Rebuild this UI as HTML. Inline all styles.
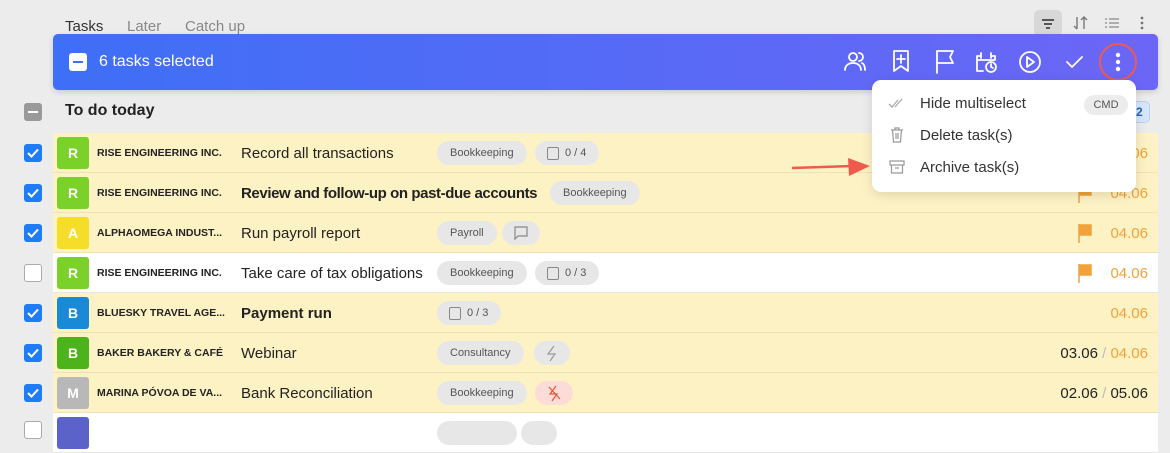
<!DOCTYPE html>
<html><head><meta charset="utf-8"><style>
*{box-sizing:border-box;margin:0;padding:0}
body{width:1170px;height:425px;overflow:hidden;background:#ececec;font-family:"Liberation Sans",sans-serif;position:relative;color:#222}
.a{position:absolute}
.tab{top:18px;font-size:15px;color:#888}
.bar{left:53px;top:34px;width:1105px;height:56px;border-radius:5px;background:linear-gradient(90deg,#3e6ff6,#6c66f6);box-shadow:0 2px 6px rgba(0,0,0,.15)}
.row{left:53px;width:1105px;height:40px;background:#fdf2c4;border-bottom:1px solid #efe3b4}
.row.w{background:#fff;border-bottom:1px solid #e6e6e6}
.cb{left:24px;width:18px;height:18px;border-radius:3px;background:#1f7cf5}
.cb svg{position:absolute;left:2px;top:2px}
.cb.e{background:#fff;border:1.5px solid #aaa}
.av{left:4px;top:4px;width:32px;height:32px;border-radius:3px;color:#fff;font-weight:bold;font-size:14px;text-align:center;line-height:32px}
.co{left:44px;top:14px;font-size:10.5px;font-weight:bold;color:#222}
.ti{left:188px;top:12px;font-size:15px;color:#222}
.tg{top:8px;height:24px;border-radius:12px;background:#e7e7e7;font-size:11px;color:#555;line-height:24px;padding:0 13px}
.dt{right:10px;top:12px;font-size:15px;color:#f1a23a}
.fl{top:10px;width:16px;height:20px}
.mi{left:48px;font-size:15px;color:#333}
</style></head><body>
<div class="a tab" style="left:65px;color:#333">Tasks</div>
<div class="a tab" style="left:127px">Later</div>
<div class="a tab" style="left:185px">Catch up</div>
<div class="a" style="left:1034px;top:10px;width:28px;height:26px;border-radius:5px;background:#d8d8d8"></div>
<svg class="a" style="left:1039px;top:15px" width="18" height="16"><path d="M3 5h12M5 9h8M7 13h4" stroke="#444" stroke-width="1.8"/></svg>
<svg class="a" style="left:1072px;top:14px" width="18" height="18"><path d="M5 3v12M2 12l3 3M12 15V3M9 6l3-3 3 3" stroke="#777" stroke-width="1.4" fill="none"/></svg>
<svg class="a" style="left:1103px;top:15px" width="18" height="16"><path d="M2 4h2M6 4h10M2 8h2M6 8h10M2 12h2M6 12h10" stroke="#999" stroke-width="1.4"/></svg>
<svg class="a" style="left:1138px;top:14px" width="8" height="18"><circle cx="4" cy="4" r="1.4" fill="#777"/><circle cx="4" cy="9" r="1.4" fill="#777"/><circle cx="4" cy="14" r="1.4" fill="#777"/></svg>

<div class="a" style="left:24px;top:103px;width:18px;height:18px;border-radius:3px;background:#999"><div class="a" style="left:4px;top:8px;width:10px;height:2px;background:#fff"></div></div>
<div class="a" style="left:65px;top:102px;font-size:16px;font-weight:bold">To do today</div>
<div class="a" style="left:1126px;top:101px;width:24px;height:22px;border-radius:5px;background:#d6e6fb;border:1px solid #b7d0f4;font-size:12px;color:#2a63b8;font-weight:bold;line-height:20px;padding-left:9px">2</div>

<div class="a row" style="top:133px"><div class="a av" style="background:#79d12a">R</div><div class="a co">RISE ENGINEERING INC.</div><div class="a ti">Record all transactions</div><div class="a tg" style="left:384px">Bookkeeping</div><div class="a tg" style="left:482px;padding-left:30px">0 / 4</div><div class="a" style="left:494px;top:14px;width:12px;height:13px;border:1.3px solid #888;border-radius:2px"></div><div class="a dt">04.06</div></div>
<div class="a row" style="top:173px"><div class="a av" style="background:#79d12a">R</div><div class="a co">RISE ENGINEERING INC.</div><div class="a ti" style="font-weight:bold;letter-spacing:-0.4px">Review and follow-up on past-due accounts</div><div class="a tg" style="left:497px">Bookkeeping</div><svg class="a fl" style="left:1024px"><path d="M2 1v19M2 2h12v10H2" fill="#f1a23a" stroke="#f1a23a" stroke-width="1.5"/></svg><div class="a dt">04.06</div></div>
<div class="a row" style="top:213px"><div class="a av" style="background:#f6dd2a">A</div><div class="a co">ALPHAOMEGA INDUST...</div><div class="a ti">Run payroll report</div><div class="a tg" style="left:384px">Payroll</div><div class="a tg" style="left:449px;width:38px"></div><svg class="a" style="left:460px;top:8px" width="16" height="24"><path d="M2 6h12v9H5l-3 3z" fill="none" stroke="#888" stroke-width="1.2"/></svg><svg class="a fl" style="left:1024px"><path d="M2 1v19M2 2h12v10H2" fill="#f1a23a" stroke="#f1a23a" stroke-width="1.5"/></svg><div class="a dt">04.06</div></div>
<div class="a row w" style="top:253px"><div class="a av" style="background:#79d12a">R</div><div class="a co">RISE ENGINEERING INC.</div><div class="a ti">Take care of tax obligations</div><div class="a tg" style="left:384px">Bookkeeping</div><div class="a tg" style="left:482px;padding-left:30px">0 / 3</div><div class="a" style="left:494px;top:14px;width:12px;height:13px;border:1.3px solid #888;border-radius:2px"></div><svg class="a fl" style="left:1024px"><path d="M2 1v19M2 2h12v10H2" fill="#f1a23a" stroke="#f1a23a" stroke-width="1.5"/></svg><div class="a dt">04.06</div></div>
<div class="a row" style="top:293px"><div class="a av" style="background:#1a8ad8">B</div><div class="a co">BLUESKY TRAVEL AGE...</div><div class="a ti" style="font-weight:bold">Payment run</div><div class="a tg" style="left:384px;padding-left:30px">0 / 3</div><div class="a" style="left:396px;top:14px;width:12px;height:13px;border:1.3px solid #888;border-radius:2px"></div><div class="a dt">04.06</div></div>
<div class="a row" style="top:333px"><div class="a av" style="background:#4cb31a">B</div><div class="a co">BAKER BAKERY &amp; CAFÉ</div><div class="a ti">Webinar</div><div class="a tg" style="left:384px">Consultancy</div><div class="a tg" style="left:481px;width:36px"></div><svg class="a" style="left:491px;top:8px" width="16" height="24"><path d="M10 5l-6 8h7l-5 7" fill="none" stroke="#999" stroke-width="1.2"/></svg><div class="a dt"><span style="color:#222">03.06</span> <span style="color:#bbb">/</span> 04.06</div></div>
<div class="a row" style="top:373px"><div class="a av" style="background:#b8b8b8">M</div><div class="a co">MARINA PÓVOA DE VA...</div><div class="a ti">Bank Reconciliation</div><div class="a tg" style="left:384px">Bookkeeping</div><div class="a tg" style="left:482px;width:38px;background:#fbdcd6"></div><svg class="a" style="left:493px;top:8px" width="16" height="24"><path d="M10 5l-6 8h7l-5 7M3 6l11 12" fill="none" stroke="#e8553a" stroke-width="1.2"/></svg><div class="a dt" style="color:#222">02.06 <span style="color:#bbb">/</span> 05.06</div></div>
<div class="a row w" style="top:413px"><div class="a av" style="background:#5b63c9"></div><div class="a tg" style="left:384px;width:80px"></div><div class="a tg" style="left:468px;width:36px"></div></div>

<div class="a cb" style="top:144px"><svg width="14" height="14"><path d="M2 7l3.5 3.5L12 3.5" stroke="#fff" stroke-width="2" fill="none"/></svg></div>
<div class="a cb" style="top:184px"><svg width="14" height="14"><path d="M2 7l3.5 3.5L12 3.5" stroke="#fff" stroke-width="2" fill="none"/></svg></div>
<div class="a cb" style="top:224px"><svg width="14" height="14"><path d="M2 7l3.5 3.5L12 3.5" stroke="#fff" stroke-width="2" fill="none"/></svg></div>
<div class="a cb e" style="top:264px"></div>
<div class="a cb" style="top:304px"><svg width="14" height="14"><path d="M2 7l3.5 3.5L12 3.5" stroke="#fff" stroke-width="2" fill="none"/></svg></div>
<div class="a cb" style="top:344px"><svg width="14" height="14"><path d="M2 7l3.5 3.5L12 3.5" stroke="#fff" stroke-width="2" fill="none"/></svg></div>
<div class="a cb" style="top:384px"><svg width="14" height="14"><path d="M2 7l3.5 3.5L12 3.5" stroke="#fff" stroke-width="2" fill="none"/></svg></div>
<div class="a cb e" style="top:421px"></div>

<div class="a bar">
<div class="a" style="left:16px;top:19px;width:18px;height:18px;border-radius:3px;background:#fff"><div class="a" style="left:4px;top:8px;width:10px;height:2px;background:#3e6ff6"></div></div>
<div class="a" style="left:46px;top:19px;font-size:16px;color:#fff">6 tasks selected</div>
<svg class="a" style="left:788px;top:14px" width="350" height="28" fill="none" stroke="#fff" stroke-width="1.8" stroke-linecap="round" stroke-linejoin="round">
<circle cx="12" cy="9" r="4"/><path d="M4 22c0-4 3-7 8-7s8 3 8 7M18 5a4 4 0 0 1 0 8M21 15c2 1 3 4 3 7"/>
<path d="M53 3h14v20l-7-5-7 5zM60 7v8M56 11h8"/>
<path d="M96 25V3h16l-3 6 3 6H96"/>
<path d="M140 8h-4v15h6M136 12h18V8h-4M140 5v5M150 5v5"/><circle cx="150" cy="19" r="5"/><path d="M150 16v3l2 1"/>
<circle cx="189" cy="14" r="10"/><path d="M186 9v10l7-5z"/>
<path d="M226 14l5 5 10-10"/>
<circle cx="277" cy="7" r="1.3" fill="#fff"/><circle cx="277" cy="14" r="1.3" fill="#fff"/><circle cx="277" cy="21" r="1.3" fill="#fff"/>
</svg>
</div>
<div class="a" style="left:1099px;top:43px;width:38px;height:38px;border-radius:50%;border:2.5px solid #ef5a4c"></div>

<div class="a" style="left:872px;top:80px;width:264px;height:112px;background:#fff;border-radius:9px;box-shadow:0 3px 12px rgba(0,0,0,.12)">
<svg class="a" style="left:16px;top:16px" width="18" height="14"><path d="M1 8l3 3 6-7M7 11l7-8" stroke="#aaa" stroke-width="1.3" fill="none"/></svg>
<div class="a mi" style="top:15px">Hide multiselect</div>
<div class="a" style="left:212px;top:15px;width:44px;height:20px;border-radius:10px;background:#ececec;font-size:11px;color:#555;text-align:center;line-height:20px">CMD</div>
<svg class="a" style="left:18px;top:47px" width="14" height="16"><path d="M1 3h12M5 3V1h4v2M2.5 3l1 12h7l1-12M6 6v6M8 6v6" stroke="#999" stroke-width="1.2" fill="none"/></svg>
<div class="a mi" style="top:47px">Delete task(s)</div>
<svg class="a" style="left:17px;top:80px" width="16" height="14"><path d="M1 1h14v4H1zM2.5 5v8h11V5M6 8h4" stroke="#999" stroke-width="1.2" fill="none"/></svg>
<div class="a mi" style="top:79px">Archive task(s)</div>
</div>
<svg class="a" style="left:790px;top:155px" width="90" height="25"><path d="M2 13l60-2" stroke="#ef5a4c" stroke-width="2.5"/><path d="M58 3l22 8-21 10z" fill="#ef5a4c"/></svg>
</body></html>
